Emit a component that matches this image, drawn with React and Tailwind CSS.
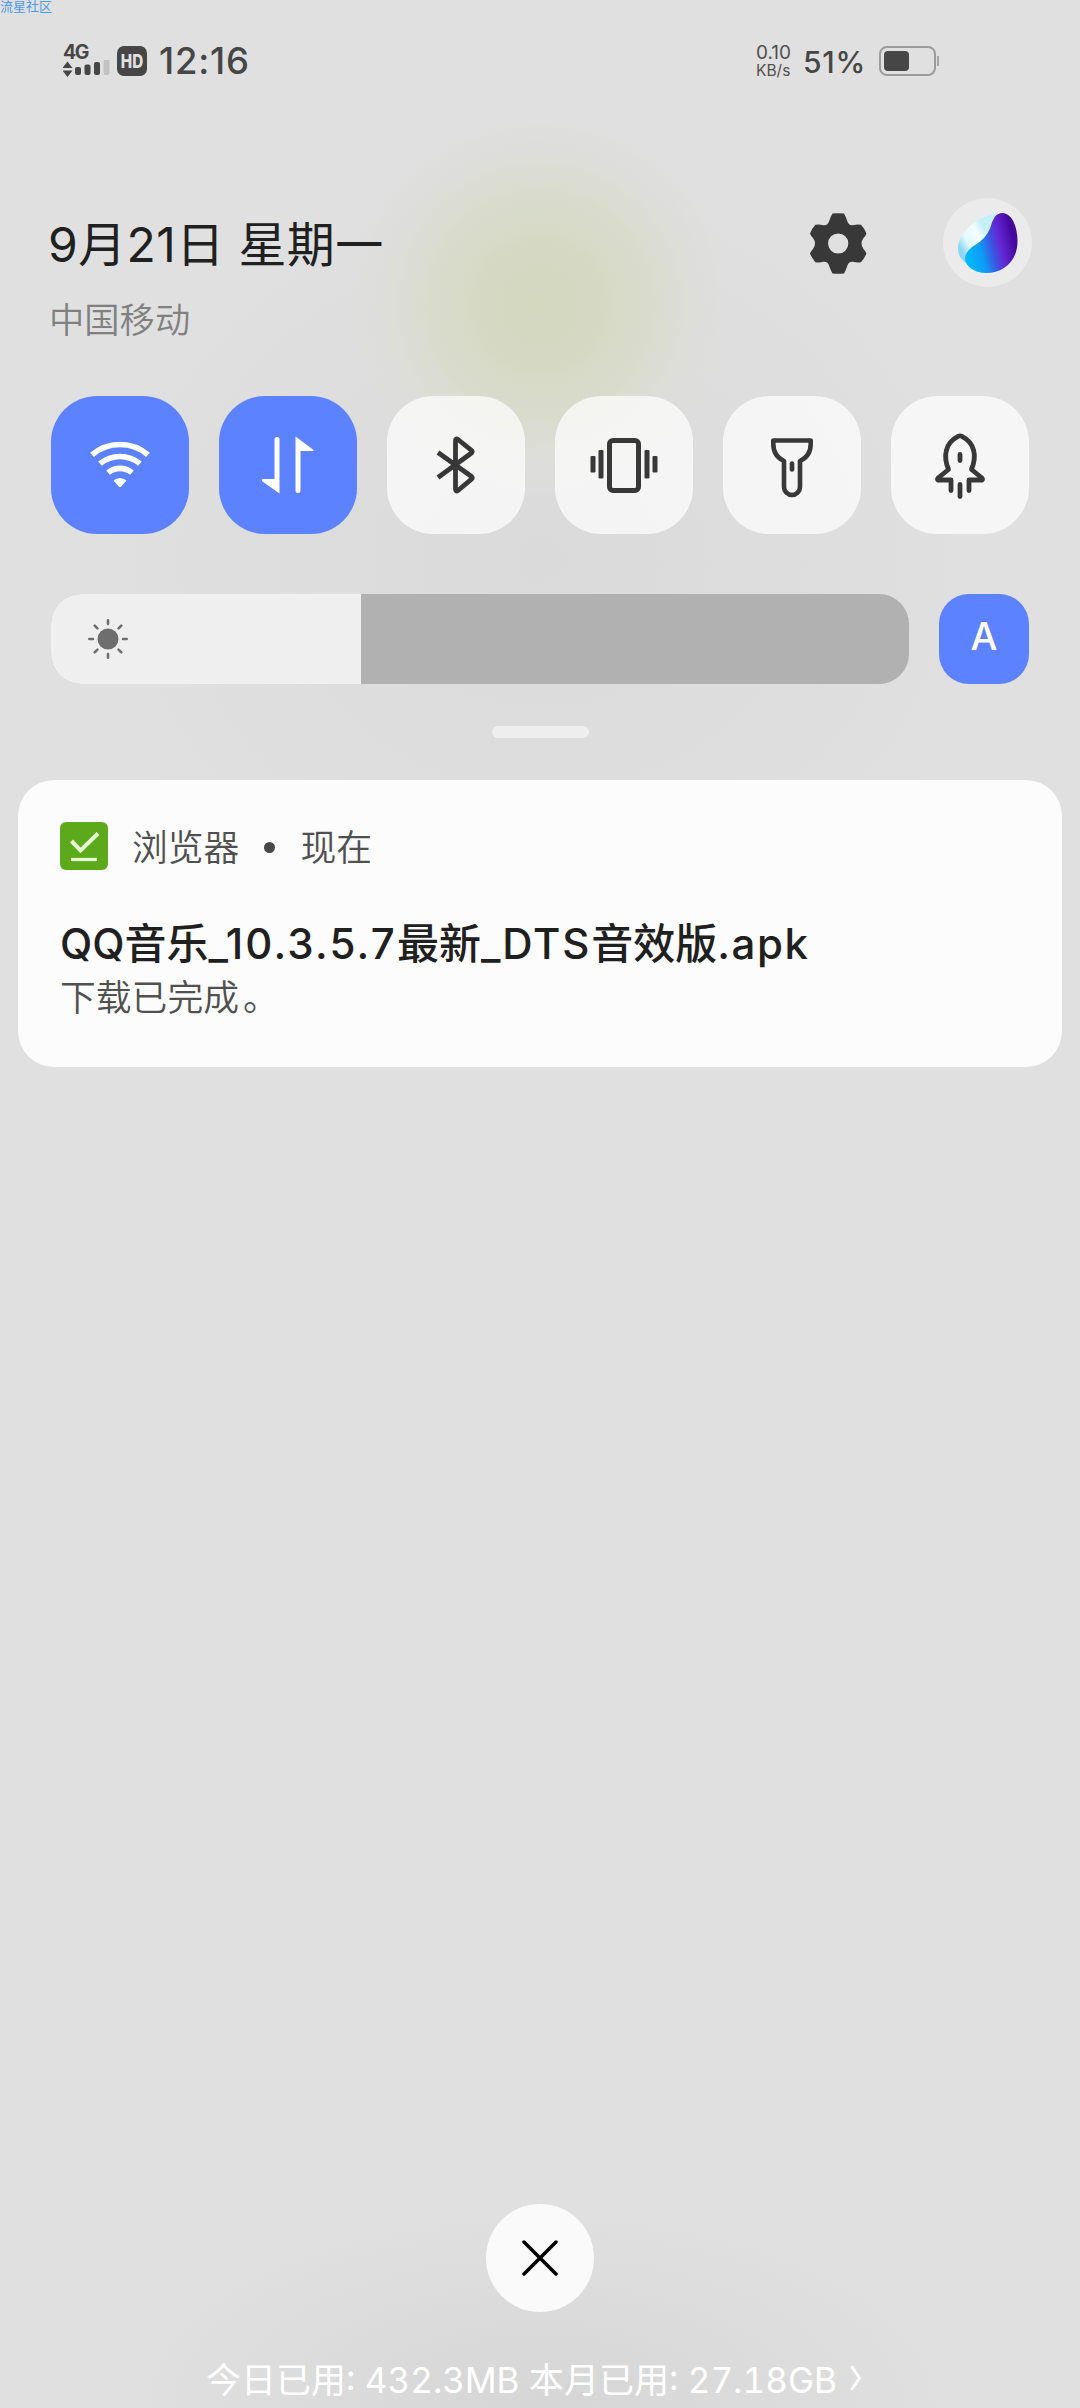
import React, { useState } from 'react';

const WifiIcon = () => (
  <svg width="138" height="138" viewBox="0 0 138 138" fill="none" stroke="#fff" strokeWidth="5.6">
    <path d="M41 58.8a43 43 0 0 1 56 0" />
    <path d="M49 67.6a31.5 31.5 0 0 1 40 0" />
    <path d="M57 76.6a19 19 0 0 1 24 0" />
    <path d="M62.5 84.5Q69 79.5 75.5 84.5L70.2 90.5Q69 91.5 67.8 90.5Z" fill="#fff" stroke="none" />
  </svg>
);

const DataIcon = () => (
  <svg width="138" height="138" viewBox="0 0 138 138" fill="#fff">
    <path d="M55.5 43.5a2.5 2.5 0 0 1 5 0V97.5L43.5 85.5Q42 83.2 44 83H55.5Z" />
    <path d="M76.5 40.5L94 53.5Q95.5 55 93.5 55H81.5V94.5a2.5 2.5 0 0 1-5 0Z" />
  </svg>
);

const BluetoothIcon = () => (
  <svg width="138" height="138" viewBox="0 0 138 138" fill="none" stroke="#383838" strokeWidth="4.8" strokeLinejoin="round">
    <path d="M51 56.5L84.5 80.5Q86 82 84.5 83.2L71 94.5Q68.5 96 68.5 93V45Q68.5 42 71 43.5L84.5 54.3Q86 55.5 84.5 57L51 81.5" />
  </svg>
);

const VibrateIcon = () => (
  <svg width="138" height="138" viewBox="0 0 138 138" fill="none">
    <rect x="54.5" y="44.5" width="29" height="50" rx="3.5" stroke="#383838" strokeWidth="5" />
    <g fill="#383838">
      <rect x="35.5" y="60" width="5" height="16.5" rx="1" />
      <rect x="43.5" y="54" width="5" height="28.5" rx="1" />
      <rect x="89.5" y="54" width="5" height="28.5" rx="1" />
      <rect x="97.5" y="60" width="5" height="16.5" rx="1" />
    </g>
  </svg>
);

const TorchIcon = () => (
  <svg width="138" height="138" viewBox="0 0 138 138" fill="none" stroke="#383838" strokeWidth="4.6" strokeLinejoin="round">
    <path d="M50.3 44.5H87.7V48Q87.7 60 77 65V91a8 8 0 0 1-16 0V65Q50.3 60 50.3 48Z" />
    <path d="M69 67.5V73.5" strokeLinecap="round" />
  </svg>
);

const RocketIcon = () => (
  <svg width="138" height="138" viewBox="0 0 138 138" fill="none" stroke="#383838" strokeWidth="4.8" strokeLinecap="round" strokeLinejoin="round">
    <path d="M60 94.5V84H47Q46 83.5 47 82L57.5 73.5C52 60 54 47 67.5 40.2Q69 39.5 70.5 40.2C84 47 86 60 80.5 73.5L91 82Q92 83.5 91 84H78V94.5" />
    <path d="M69 58.5V64.5M69 88.5V100.5" />
  </svg>
);

const GearIcon = () => (
  <svg width="57" height="61" viewBox="0 0 57 61" fill="#383838" fillRule="evenodd">
    <path d="M22.5.6Q28.2 0 34 .6Q36 4 37.2 8Q38.5 12.6 43 12.2Q47.5 11 51 11.8Q54.5 15.5 56.4 20.5Q56 22.5 53.5 25Q49.5 30.5 53.5 36Q56 38.5 56.4 40.5Q54.5 45.5 51 49.2Q47.5 50 43 48.8Q38.5 48.4 37.2 53Q36 57 34 60.4Q28.2 61 22.5 60.4Q20.5 57 19.2 53Q17.9 48.4 13.4 48.8Q9 50 5.4 49.2Q2 45.5 0 40.5Q.5 38.5 3 36Q7 30.5 3 25Q.5 22.5 0 20.5Q2 15.5 5.4 11.8Q9 11 13.4 12.2Q17.9 12.6 19.2 8Q20.5 4 22.5.6ZM38.3 30.5a10.1 10.1 0 1 0-20.2 0a10.1 10.1 0 1 0 20.2 0Z" />
  </svg>
);

const JoviIcon = () => (
  <svg width="60" height="62" viewBox="0 0 60 62">
    <defs>
      <linearGradient id="shell" x1="0.05" y1="0.7" x2="0.6" y2="0.3">
        <stop offset="0" stopColor="#8ed6f3" />
        <stop offset="0.3" stopColor="#e0f8fe" />
        <stop offset="0.7" stopColor="#f5ffff" />
        <stop offset="1" stopColor="#c5f0f8" />
      </linearGradient>
      <linearGradient id="body" x1="0.05" y1="0.75" x2="0.95" y2="0.5">
        <stop offset="0" stopColor="#00b8ff" />
        <stop offset="0.3" stopColor="#0e9cf6" />
        <stop offset="0.52" stopColor="#3a58e2" />
        <stop offset="0.72" stopColor="#6426d4" />
        <stop offset="1" stopColor="#44089c" />
      </linearGradient>
    </defs>
    <path d="M44 1C24 1 0 18 0 37C0 43 3 48 8 51L30 36L40 3Z" fill="url(#shell)" />
    <path d="M37 4.5Q40 1 44.5 1C55 2 59.5 16 59.5 29C59.5 49 46 61 28 61C16 61 7 54 7 46Q8 38.5 17 33Q28 26.5 32 16.5Q34 9 37 4.5Z" fill="url(#body)" />
  </svg>
);

const SunIcon = () => (
  <svg width="40" height="40" viewBox="0 0 40 40" stroke="#6e6e6e" strokeWidth="2.6" strokeLinecap="round">
    <circle cx="20" cy="20" r="10.5" fill="#6e6e6e" stroke="none" />
    <path d="M20 1.3V5M20 35V38.7M1.3 20H5M35 20H38.7M6.7 6.7L9.4 9.4M30.6 30.6L33.3 33.3M6.7 33.3L9.4 30.6M30.6 9.4L33.3 6.7" />
  </svg>
);

const StatusBar = () => (
  <div className="flex h-[122px] items-start pt-[43px] pr-[141px] pl-[63px] text-[#464646]">
    <div className="w-[54px]">
      <div className="h-[17px] text-[19.5px] leading-[18px] font-bold tracking-[-1.5px]">4G</div>
      <svg width="48" height="18" viewBox="0 0 48 18" fill="#464646">
        <path d="M4.5 1.5L9.5 8H-.5ZM-.5 10.5H9.5L4.5 17Z" />
        <rect x="12" y="7" width="6" height="8" rx="2" />
        <rect x="21.5" y="4.5" width="6" height="10.5" rx="2" />
        <rect x="31" y="2" width="6" height="13" rx="2" />
        <rect x="40.5" y="-1" width="6" height="16" rx="2" fill="#c2c2c2" />
      </svg>
    </div>
    <div className="mt-[3px] flex h-[30px] w-[30px] items-center justify-center rounded-[7px] bg-[#464646] text-[19px] leading-none font-extrabold text-[#e0e0e0]">
      <span className="scale-x-80">HD</span>
    </div>
    <div className="ml-[12px] text-[36.5px] leading-[36px] font-medium tracking-[0.8px]">12:16</div>
    <div className="ml-auto w-[36px] text-[#505050]">
      <div className="text-[19px] leading-[20px]">0.10</div>
      <div className="text-[15.5px] leading-[16px]">KB/s</div>
    </div>
    <div className="mt-[4px] ml-[11px] w-[63px] text-[30px] leading-[30px] font-medium tracking-[0.8px] whitespace-nowrap">51%</div>
    <div className="mt-[3px] ml-[13px] flex items-center gap-px">
      <div className="h-[30px] w-[57px] rounded-[8px] border-2 border-[#9c9c9c] p-[3px]">
        <div className="h-[20px] w-[25px] rounded-[4px] bg-[#464646]" />
      </div>
      <div className="h-[10px] w-[2px] bg-[#a6a6a6]" />
    </div>
  </div>
);

const toggles = [
  { id: 'wifi', icon: <WifiIcon /> },
  { id: 'data', icon: <DataIcon /> },
  { id: 'bluetooth', icon: <BluetoothIcon /> },
  { id: 'vibrate', icon: <VibrateIcon /> },
  { id: 'torch', icon: <TorchIcon /> },
  { id: 'boost', icon: <RocketIcon /> },
];

const App = () => {
  const [active, setActive] = useState(['wifi', 'data']);
  const [autoBrightness, setAutoBrightness] = useState(true);

  const toggle = (id) => {
    setActive(prev => (prev.includes(id) ? prev.filter(t => t !== id) : [...prev, id]));
  };

  return (
    <div className="relative flex h-[2408px] w-[1080px] flex-col overflow-hidden bg-[#e0e0e0] bg-[radial-gradient(ellipse_190px_190px_at_540px_305px,#d4d8bf_0%,#d5d9c3_30%,#d9dccd_60%,#dddeda_82%,transparent_100%),radial-gradient(ellipse_460px_400px_at_540px_560px,#dadada_0%,transparent_100%),radial-gradient(ellipse_420px_200px_at_540px_2408px,#d6d6d6_0%,transparent_100%)] font-['Inter','Noto_Sans_CJK_SC',sans-serif]">
      <div className="absolute top-0 left-0 text-[13px] leading-[13px] text-[#4b9be8]">流星社区</div>

      <StatusBar />

      <div className="flex h-[274px] items-start pr-[48px] pl-[49px]">
        <div className="pt-[88px]">
          <div className="ml-[-1px] text-[48px] leading-[70px] tracking-[0.4px] text-[#202020]">9月21日 星期一</div>
          <div className="mt-[14px] text-[35.3px] leading-[54px] font-[350] text-[#808080]">中国移动</div>
        </div>
        <div className="mt-[91px] ml-auto">
          <GearIcon />
        </div>
        <div className="mt-[76px] ml-[76px] flex h-[89px] w-[89px] items-center justify-center rounded-full bg-[#ebebeb]">
          <JoviIcon />
        </div>
      </div>

      <div className="flex gap-[30px] px-[51px]">
        {toggles.map(t => (
          <button
            key={t.id}
            onClick={() => toggle(t.id)}
            className={`h-[138px] w-[138px] rounded-[46px] ${active.includes(t.id) ? 'bg-[#5c82ff]' : 'bg-white/70'}`}
          >
            {t.icon}
          </button>
        ))}
      </div>

      <div className="mt-[60px] flex gap-[30px] px-[51px]">
        <div className="flex h-[90px] w-[858px] overflow-hidden rounded-[30px] bg-[#b1b1b1]">
          <div className="flex w-[310px] items-center bg-[#efefef] pl-[37px]">
            <SunIcon />
          </div>
        </div>
        <button
          onClick={() => setAutoBrightness(!autoBrightness)}
          className={`flex h-[90px] w-[90px] items-start justify-center rounded-[30px] pt-[22px] text-[38px] leading-[40px] font-medium text-white ${autoBrightness ? 'bg-[#5c82ff]' : 'bg-[#b1b1b1]'}`}
        >
          A
        </button>
      </div>

      <div className="mx-auto mt-[42px] h-[12px] w-[97px] rounded-full bg-[#eeeeee]" />

      <div className="mx-[18px] mt-[42px] h-[287px] rounded-[36px] bg-[#fcfcfc] px-[42px] pt-[42px]">
        <div className="flex items-center">
          <svg width="48" height="48" viewBox="0 0 48 48" fill="none" stroke="#e6fcd5" strokeWidth="4">
            <rect width="48" height="48" rx="6" fill="#5caa1b" stroke="none" />
            <path d="M11.5 19L20.5 28.5L38 11.5" />
            <path d="M11 37.5H37" strokeWidth="3.2" />
          </svg>
          <div className="ml-[24px] flex h-[48px] items-center pt-[3px] text-[35.8px] leading-[48px] font-[350] text-[#505050]">
            <span>浏览器</span>
            <span className="mx-[25px] h-[11px] w-[11px] rounded-full bg-[#484848]" />
            <span>现在</span>
          </div>
        </div>
        <div className="mt-[44px] text-[42px] leading-[60px] font-medium whitespace-nowrap text-[#202020]">
          QQ音乐<span className="tracking-[2.2px]">_10.3.5.7</span>最新<span className="tracking-[1.8px]">_DTS</span>音效版<span className="tracking-[1.6px]">.apk</span>
        </div>
        <div className="text-[35.8px] leading-[48px] font-[350] text-[#505050]">
          下载已完成<span className="ml-[4px]">。</span>
        </div>
      </div>

      <div className="mt-auto flex flex-col items-center">
        <button className="flex h-[108px] w-[108px] items-center justify-center rounded-full bg-[#fafafa]">
          <svg width="36" height="36" viewBox="0 0 36 36" stroke="#000" strokeWidth="3.5" strokeLinecap="round">
            <path d="M2 2L34 34M34 2L2 34" />
          </svg>
        </button>
        <div className="mt-[40px] mr-[12px] flex h-[56px] w-[656px] items-center justify-between text-[35px] leading-[56px] whitespace-nowrap text-white">
          <span className="tabular-nums [font-kerning:none]">今日已用: 432.3MB 本月已用: 27.18GB</span>
          <svg className="mb-[2px]" width="12" height="28" viewBox="0 0 12 28" fill="none" stroke="#fff" strokeWidth="3" strokeLinecap="round">
            <path d="M2 2L9.5 13L2 24" />
          </svg>
        </div>
      </div>
    </div>
  );
};

export default App;
